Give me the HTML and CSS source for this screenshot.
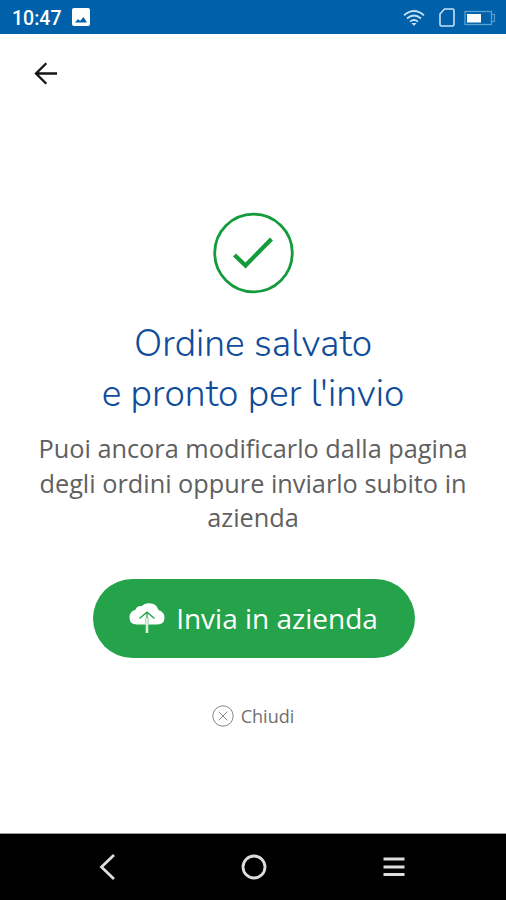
FILE: index.html
```html
<!DOCTYPE html>
<html lang="it">
<head>
    <meta charset="UTF-8">
    <meta name="viewport" content="width=device-width, initial-scale=1.0">
    <title>Ordine salvato</title>
    <link rel="stylesheet" href="styles.css">
</head>
<body>
    <header class="status-bar">
        <span class="clock">10:47</span>
        <svg class="status-photo" width="18" height="18" viewBox="0 0 18 18">
            <rect width="18" height="18" rx="2" fill="#fff"/>
            <path d="M3 14.5 L6 11 L8 13 L11.5 9 L15 14.5 Z" fill="#0060a9"/>
        </svg>
        <div class="status-icons">
            <svg width="22" height="18" viewBox="0 0 22 18" fill="none" stroke="#c6e2f5" stroke-width="1.7">
                <path d="M1 6.3 Q11 -2.3 21 6.3"/>
                <path d="M4 9.5 Q11 3.5 18 9.5"/>
                <path d="M7 12.6 Q11 9.4 15 12.6"/>
                <path d="M8.5 14 L13.5 14 L11 17 Z" fill="#c6e2f5" stroke="none"/>
            </svg>
            <svg class="sim" width="16" height="19" viewBox="0 0 16 19" fill="none" stroke="#c6e2f5" stroke-width="1.6">
                <path d="M5.5 1 H13.5 Q15 1 15 2.5 V16.5 Q15 18 13.5 18 H2.5 Q1 18 1 16.5 V6 Z"/>
            </svg>
            <svg class="battery" width="32" height="16" viewBox="0 0 32 16">
                <rect x="1" y="1.5" width="26.5" height="13" fill="none" stroke="#5ba0d2" stroke-width="1.3"/>
                <path d="M28 4.5 H30.5 V11.5 H28" fill="none" stroke="#5ba0d2" stroke-width="1.2"/>
                <rect x="3" y="4" width="14" height="8.5" fill="#fff"/>
            </svg>
        </div>
    </header>

    <main class="content">
        <a class="back" href="#" aria-label="Indietro">
            <svg width="24" height="24" viewBox="0 0 24 24" fill="none" stroke="#151515" stroke-width="2.3">
                <path d="M24 11.5 H3.5 M13.3 1.3 L3 11.5 L13.3 21.7"/>
            </svg>
        </a>
        <svg class="check" width="82" height="82" viewBox="0 0 82 82" fill="none" stroke="#149b3c">
            <circle cx="41.5" cy="41" r="38.8" stroke-width="2.8"/>
            <path d="M22.5 43 L33.5 53.5 L59.5 27" stroke-width="4.2"/>
        </svg>
        <h1>Ordine salvato<br>e pronto per l'invio</h1>
        <p class="message">Puoi ancora modificarlo dalla pagina<br>degli ordini oppure inviarlo subito in<br>azienda</p>
        <button class="send-button">
            <svg width="36" height="32" viewBox="0 0 36 32">
                <path d="M8 22.5 Q0.5 22.5 0.5 15.5 Q0.5 9.5 6.5 7.8 Q8 3.5 12.5 4.2 Q15.5 1 20.5 1.2 Q27.5 1.5 29.5 8 Q35.5 10 35.5 15.5 Q35.5 22.5 28 22.5 Z" fill="#fff"/>
                <path d="M18 11 V22.5 M10.5 16.5 L18 10.2 L25.5 16.5" fill="none" stroke="#24a34b" stroke-width="1.3"/>
                <path d="M16.5 16 V23 M19.5 16 V23" fill="none" stroke="#8fcfa2" stroke-width="0.8"/>
                <path d="M18 16 V31" fill="none" stroke="#d6f0dc" stroke-width="2.6"/>
            </svg>
            <span>Invia in azienda</span>
        </button>
        <a class="close" href="#">
            <svg width="22" height="22" viewBox="0 0 22 22" fill="none" stroke="#888" stroke-width="1">
                <circle cx="11" cy="11" r="10.2"/>
                <path d="M6.7 6.7 L15.3 15.3 M15.3 6.7 L6.7 15.3"/>
            </svg>
            <span>Chiudi</span>
        </a>
    </main>

    <nav class="nav-bar">
        <svg width="24" height="28" viewBox="0 0 24 28" fill="none" stroke="#dedede" stroke-width="2.8">
            <path d="M19 2 L6.5 14 L19 26"/>
        </svg>
        <svg width="26" height="26" viewBox="0 0 26 26" fill="none" stroke="#dedede" stroke-width="2.8">
            <circle cx="13" cy="13" r="11"/>
        </svg>
        <svg width="24" height="22" viewBox="0 0 24 22" fill="none" stroke="#dedede" stroke-width="3">
            <path d="M1.5 3 H22.5 M1.5 11 H22.5 M1.5 18.5 H22.5"/>
        </svg>
    </nav>
</body>
</html>
```
FILE: styles.css
```css
* {
    box-sizing: border-box;
}
body {
    margin: 0;
    height: 900px;
    display: flex;
    flex-direction: column;
    background: #fff;
    font-family: 'Open Sans', 'Noto Sans', sans-serif;
    overflow: hidden;
}
a {
    text-decoration: none;
}
svg {
    display: block;
    flex-shrink: 0;
}
.status-bar {
    height: 34px;
    flex-shrink: 0;
    display: flex;
    align-items: center;
    padding: 0 10px 0 12px;
    background: #0060a9;
}
.clock {
    font-family: Roboto, sans-serif;
    font-size: 19.5px;
    font-weight: 500;
    line-height: 24px;
    color: #fff;
    margin-top: 3px;
}
.status-photo {
    margin-left: 11px;
}
.status-icons {
    display: flex;
    align-items: center;
    margin: 1px 0 0 auto;
}
.sim {
    margin-left: 14px;
}
.battery {
    margin-left: 9px;
}
.content {
    flex: 1;
    display: flex;
    flex-direction: column;
    align-items: center;
}
.back {
    align-self: flex-start;
    margin: 28px 0 0 33px;
}
.check {
    margin-top: 126px;
}
h1 {
    margin: 25px 0 0;
    font-family: Nunito, Lato, sans-serif;
    font-size: 37.2px;
    font-weight: 300;
    line-height: 50px;
    text-align: center;
    color: #0f4c9a;
}
.message {
    margin: 12px 0 0;
    font-size: 25.3px;
    line-height: 34.5px;
    text-align: center;
    color: #606060;
}
.send-button {
    width: 322px;
    height: 79px;
    margin: 44px 0 0 1px;
    padding: 0;
    display: flex;
    align-items: center;
    justify-content: center;
    gap: 11px;
    border: none;
    border-radius: 40px;
    background: #24a34b;
    color: #fff;
    font-family: inherit;
    font-size: 28px;
    cursor: pointer;
}
.close {
    display: flex;
    align-items: center;
    gap: 7px;
    margin-top: 46px;
    font-size: 18px;
    color: #707070;
}
.nav-bar {
    height: 67px;
    flex-shrink: 0;
    display: flex;
    align-items: center;
    justify-content: space-between;
    padding: 0 100px 0 95px;
    background: #000;
    border-top: 1px solid #999;
}
.nav-bar svg:nth-child(2) {
    margin-left: 6px;
}
```
